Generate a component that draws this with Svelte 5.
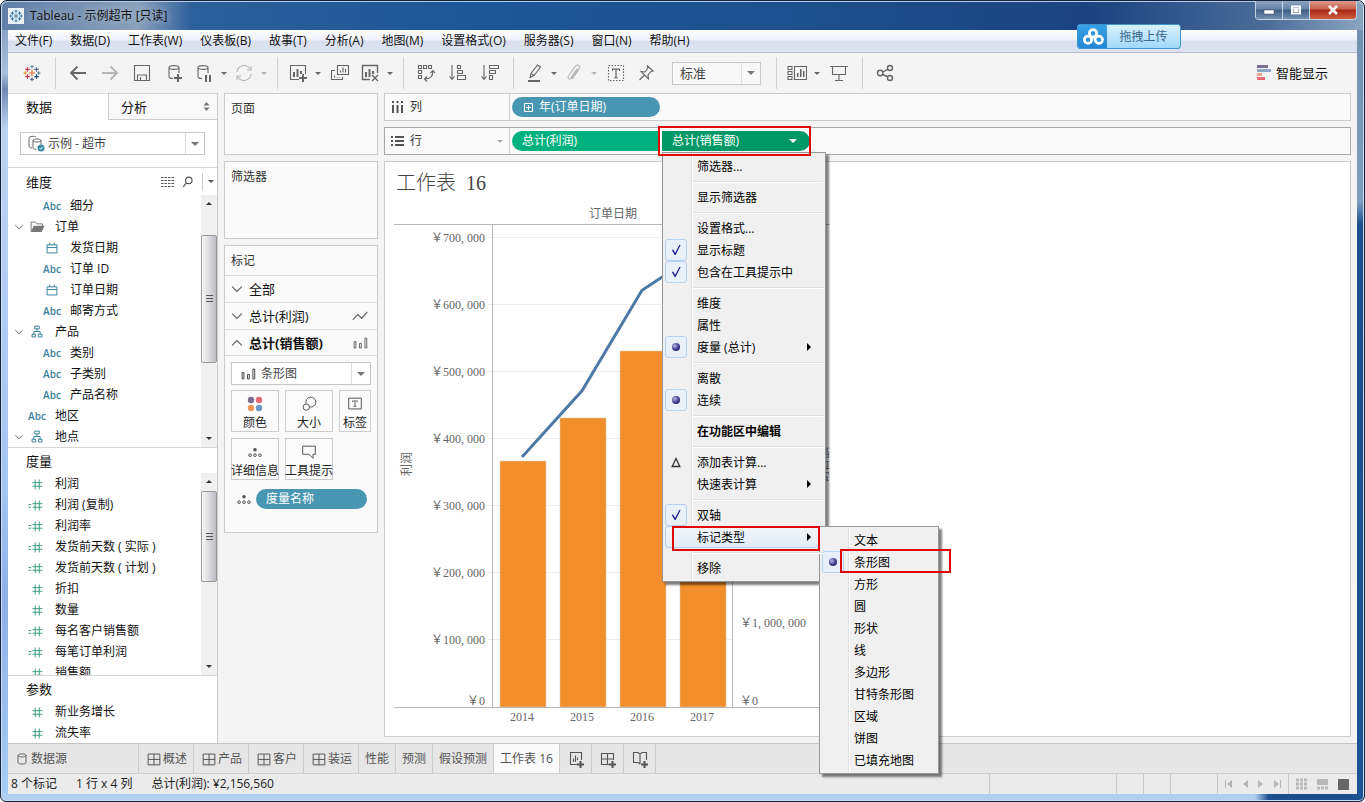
<script>
	const menus = ['文件(F)', '数据(D)', '工作表(W)', '仪表板(B)', '故事(T)', '分析(A)', '地图(M)', '设置格式(O)', '服务器(S)', '窗口(N)', '帮助(H)'];

	// d: stroked outline, f: solid parts, on a 20x20 grid
	const icons = {
		back: { d: 'M18 10H3M9.5 3.5L3 10l6.500 6.500', w: 1.8 },
		forward: { d: 'M2 10h15M10.500 3.500L17 10l-6.500 6.500', w: 1.8 },
		save: { d: 'M2.500 2.500h15v15h-15zM5.500 17v-5h9v5M8.500 17v-3' },
		addData: { d: 'M5 4.500c0-2.500 10-2.500 10 0s-10 2.500-10 0v9c0 1.500 2 2 4 2M15 4.500V10', f: 'M13 11h2v3h3v2h-3v3h-2v-3h-3v-2h3z' },
		pauseData: { d: 'M4 4.500c0-2.500 10-2.500 10 0s-10 2.500-10 0v9c0 1.500 2 2 4 2M14 4.500V10', f: 'M11 12h2v7h-2zM15 12h2v7h-2z' },
		refresh: { d: 'M3 9a7 7 0 0 1 13-3M17 11a7 7 0 0 1-13 3M17 3v4h-4M3 17v-4h4' },
		newSheet: { d: 'M11 16.500H2.500v-14h15V11', f: 'M5 9h2v5H5zM8.500 6h2v8h-2zM12 8h2v3h-2zM14 11h2v3h3v2h-3v3h-2v-3h-3v-2h3z' },
		duplicate: { d: 'M7.500 2.500h11v9h-11zM5 7.500H1.500v9h11V14M10.500 9.500v-2M13 9.500v-5M15.500 9.500V6M4.500 14.500v-2M7 14.500V14M9.500 14.500V14' },
		clear: { d: 'M10 16.500H2.500v-14h15V10M12 12l6 6M18 12l-6 6', f: 'M5 9h2v5H5zM8.500 6h2v8h-2zM12 8h2v3h-2z', w: 1.4 },
		swap: { d: 'M2.500 2.500h3v3h-3zM7.500 2.500h3v3h-3zM12.500 2.500h3v3h-3zM2.500 7.500h3v3h-3zM2.500 12.500h3v3h-3zM17 8c0 5-3 8-8 8M14.500 10L17 7.500l2 2.500M11 13.500L8.500 16l2.500 2.500' },
		sortAsc: { d: 'M4 2v14M1.500 13.500L4 16.500l2.500-3M9.500 2.500h3v3h-3zM9.500 7.500h5v3h-5zM9.500 12.500h8v4h-8z' },
		sortDesc: { d: 'M4 2v14M1.500 13.500L4 16.500l2.500-3M9.500 2.500h9v3h-9zM9.500 7.500h6v3h-6zM9.500 12.500h3v4h-3z' },
		highlight: { d: 'M6 14.500l1-4 6.500-8.500 3 2-6.500 8.500zM7 10.500l3 2', f: 'M4 17h12v2H4z' },
		clip: { d: 'M14 6l-6 9c-2 2.500-5 .5-3.500-2L11 3.500c2-3 6-.5 4.500 2L9 15c-1 1-2.500 0-1.500-1.500L13 6' },
		text: { d: 'M2.500 2.500h15v15h-15z', f: 'M6 5.500h8V8h-1V6.700h-2.400v7.600h1.200v.9H8.200v-.9h1.200V6.700H7V8H6z', dash: '1.500 1.500' },
		pin: { d: 'M11 2.500l6 5.500-2 .5-3 3.500.5 4-7.500-7.500 4 .5 3-4zM8.500 12l-5 5' },
		cards: { d: 'M7.500 3.500h12v13h-12zM1 3.500h4v3H1zM1 8.500h4v3H1zM1 13.500h4v3H1z', f: 'M10 10h1.500v4H10zM13 6h1.500v8H13zM16 8h1.500v6H16z' },
		present: { d: 'M1 3.500h18M3.500 3.500v8h13v-8M10 11.500v6M6 17.500h8' },
		share: { d: 'M2.500 10a2.700 2.700 0 1 0 5.400 0a2.700 2.700 0 1 0-5.400 0M12.500 5a2.500 2.500 0 1 0 5 0a2.500 2.500 0 1 0-5 0M12.500 15a2.500 2.500 0 1 0 5 0a2.500 2.500 0 1 0-5 0M8 9l5-2.800M8 11.500l5 2.500', w: 1.4 },
		folder: { d: 'M3.500 15V4.500h5l1.500 2h6V9', f: 'M3 15.500L6.500 8.500h12L15 15.500z' },
		date: { d: 'M4.500 6.500h11v9h-11zM4.500 9.500h11M7.500 4v2.500M12.500 4v2.500' },
		tree: { d: 'M7.500 3.500h5v3h-5zM4.500 12.500h4v3h-4zM11.500 12.500h4v3h-4zM10 6.500v3M6.500 12.500v-3h7v3' },
		number: { d: 'M8 5v11M12.500 5v11M5 8.500h11M5 12.500h11' },
		calc: { d: 'M8 5v11M12.500 5v11M5 8.500h11M5 12.500h11M.5 9.500h3M.5 12.500h3' },
		line: { d: 'M2 14l5.500-5.500 4.500 4 6-7', w: 1.4 },
		bars: { d: 'M3.500 8.500h2v7h-2zM9.500 10.500h2v5h-2zM15.500 4.500h2v11h-2z' },
		size: { d: 'M6.800 9.500A5.500 5.500 0 1 1 10.800 13.200M3.500 13.500a3.500 3.500 0 1 0 7 0a3.500 3.500 0 1 0-7 0' },
		label: { d: 'M3 3.500h14v12H3z', f: 'M7 6h6v2h-1V7h-1.500v5h1v1h-3v-1h1V7H8v1H7z' },
		detail: { d: 'M3 13.500a1.500 1.500 0 1 0 3 0a1.500 1.500 0 1 0-3 0M8.500 13.500a1.500 1.500 0 1 0 3 0a1.500 1.500 0 1 0-3 0M14 13.500a1.500 1.500 0 1 0 3 0a1.500 1.500 0 1 0-3 0', f: 'M8 7.500a2 2 0 1 0 4 0a2 2 0 1 0-4 0' },
		tooltip: { d: 'M3 3.500h14v9h-2.500v4.500l-4.500-4.500H3z' },
		source: { d: 'M5 5.500c0-2.500 10-2.500 10 0v9c0 2.500-10 2.500-10 0zc0 2.500 10 2.500 10 0' },
		grid: { d: 'M3.500 4.500h13v12h-13zM10 4.500v12M3.500 10.500h13' },
		newTab: { d: 'M12 15.500H4.500v-12h11V11M7.500 13V9.500M9.500 13V6.500M11.500 11V8.500', f: 'M13.500 12h2v2.500H18v2h-2.500V19h-2v-2.500H11v-2h2.500z' },
		newDash: { d: 'M12 15.500H3.500v-11h12V11M9.500 4.500v11M3.500 10h12', f: 'M13.500 12h2v2.500H18v2h-2.500V19h-2v-2.500H11v-2h2.500z' },
		newStory: { d: 'M10 15l-2-1.500H3.500v-10H8l2 1.500 2-1.500h4.500V11M10 5v10', f: 'M13.500 12h2v2.500H18v2h-2.500V19h-2v-2.500H11v-2h2.500z' },
		search: { d: 'M7 8a4 4 0 1 0 8 0a4 4 0 1 0-8 0M8 11l-4 5', w: 1.5 },
		down: { d: 'M4 7l6 6 6-6', w: 1.6 },
		up: { d: 'M4 13l6-6 6 6', w: 1.6 }
	};

	const toolbar = [
		[['back', 32], ['forward', 32, 'off'], ['save', 32], ['addData', 32], ['pauseData', 28], ['caret', 12], ['refresh', 28, 'off'], ['caret', 12, 'off']],
		[['newSheet', 28], ['caret', 12], ['duplicate', 32], ['clear', 28], ['caret', 12]],
		[['swap', 32], ['sortAsc', 32], ['sortDesc', 32]],
		[['highlight', 28], ['caret', 12], ['clip', 28, 'off'], ['caret', 12, 'off'], ['text', 32], ['pin', 28], ['fit']],
		[['cards', 28], ['caret', 12], ['present', 32]],
		[['share', 32]]
	];

	const dimensions = [
		{ name: '细分', icon: 'abc', level: 1 },
		{ name: '订单', icon: 'folder', open: true },
		{ name: '发货日期', icon: 'date', level: 1 },
		{ name: '订单 ID', icon: 'abc', level: 1 },
		{ name: '订单日期', icon: 'date', level: 1 },
		{ name: '邮寄方式', icon: 'abc', level: 1 },
		{ name: '产品', icon: 'tree', open: true },
		{ name: '类别', icon: 'abc', level: 1 },
		{ name: '子类别', icon: 'abc', level: 1 },
		{ name: '产品名称', icon: 'abc', level: 1 },
		{ name: '地区', icon: 'abc' },
		{ name: '地点', icon: 'tree', open: true }
	];
	const measures = [
		{ name: '利润', icon: 'number' },
		{ name: '利润 (复制)', icon: 'calc' },
		{ name: '利润率', icon: 'calc' },
		{ name: '发货前天数 ( 实际 )', icon: 'calc' },
		{ name: '发货前天数 ( 计划 )', icon: 'calc' },
		{ name: '折扣', icon: 'number' },
		{ name: '数量', icon: 'number' },
		{ name: '每名客户销售额', icon: 'calc' },
		{ name: '每笔订单利润', icon: 'calc' },
		{ name: '销售额', icon: 'number' }
	];
	const parameters = [
		{ name: '新业务增长', icon: 'number' },
		{ name: '流失率', icon: 'number' }
	];

	const pillMenu = [
		{ text: '筛选器...' },
		null,
		{ text: '显示筛选器' },
		null,
		{ text: '设置格式...' },
		{ text: '显示标题', mark: 'check' },
		{ text: '包含在工具提示中', mark: 'check' },
		null,
		{ text: '维度' },
		{ text: '属性' },
		{ text: '度量 (总计)', mark: 'radio', arrow: true },
		null,
		{ text: '离散' },
		{ text: '连续', mark: 'radio' },
		null,
		{ text: '在功能区中编辑', bold: true },
		null,
		{ text: '添加表计算...', mark: 'delta' },
		{ text: '快速表计算', arrow: true },
		null,
		{ text: '双轴', mark: 'check' },
		{ text: '标记类型', arrow: true, active: true },
		null,
		{ text: '移除' }
	];
	const markTypes = ['文本', '条形图', '方形', '圆', '形状', '线', '多边形', '甘特条形图', '区域', '饼图', '已填充地图'];

	let sheets = ['概述', '产品', '客户', '装运'];
	let plainSheets = ['性能', '预测', '假设预测'];

	// chart
	const baseline = 507;
	const years = [
		{ year: 2014, profit: 373000, sales: 2930000 },
		{ year: 2015, profit: 472000, sales: 3440000 },
		{ year: 2016, profit: 622000, sales: 4240000 },
		{ year: 2017, profit: 681000, sales: 5100000 }
	];
	const ticks = [1, 2, 3, 4, 5, 6, 7];
	const profitY = (v) => baseline - (v / 100000) * 67;
	const salesY = (v) => Math.round(baseline - (v / 1000000) * 84);
	const yearX = (i) => 128 + i * 60;
	const linePoints = years.map((d, i) => `${yearX(i)},${profitY(d.profit)}`).join(' ');

	const logo = [
		[10, 10, 3.5, '#e8762d'],
		[5, 6, 2.5, '#c0394d'],
		[15, 6, 2.5, '#5b6591'],
		[5, 14, 2.5, '#c0394d'],
		[15, 14, 2.5, '#1f457e'],
		[10, 3, 2, '#7099a5'],
		[10, 17, 2, '#5b6591'],
		[2.5, 10, 2, '#eb912c'],
		[17.5, 10, 2, '#59879b']
	];
</script>

{#snippet icon(name, size = 20)}
	<svg class="icon" width={size} height={size} viewBox="0 0 20 20" aria-hidden="true">
		<path d={icons[name].d} fill="none" stroke="currentColor" stroke-width={icons[name].w || 1.1} stroke-dasharray={icons[name].dash} />
		{#if icons[name].f}
			<path d={icons[name].f} fill="currentColor" />
		{/if}
	</svg>
{/snippet}

{#snippet tableau(size, color)}
	<svg width={size} height={size} viewBox="0 0 20 20" aria-hidden="true">
		{#each logo as [x, y, r, c]}
			<path d="M{x - r} {y}h{r * 2}M{x} {y - r}v{r * 2}" stroke={color || c} stroke-width="1.3" />
		{/each}
	</svg>
{/snippet}

{#snippet field(item)}
	<li class="field" class:nested={item.level}>
		<span class="twisty">{#if item.open}{@render icon('down', 12)}{/if}</span>
		<span class="field-icon {item.icon}">
			{#if item.icon === 'abc'}Abc{:else}{@render icon(item.icon, 18)}{/if}
		</span>
		<span>{item.name}</span>
	</li>
{/snippet}

{#snippet scrollbar(top, height)}
	<div class="scrollbar">
		<span class="arrow up"></span>
		<div class="track">
			<div class="thumb" style="margin-top: {top}px; height: {height}px"><i></i></div>
		</div>
		<span class="arrow down"></span>
	</div>
{/snippet}

{#snippet mark(kind)}
	<span class="mark {kind}">
		{#if kind === 'check'}
			<svg width="10" height="12" viewBox="0 0 12 14"><path d="M1 7l1.500-.5L5 10.500 10 1h1.500L5.500 13H4.500z" fill="#14148c" /></svg>
		{:else if kind === 'radio'}
			<i></i>
		{:else if kind === 'delta'}
			<svg width="10" height="11" viewBox="0 0 10 11"><path d="M5 1.500L1.200 9.500h7.600z" fill="none" stroke="#333" stroke-width="1.300" /></svg>
		{/if}
	</span>
{/snippet}

<div class="window">
	<header class="titlebar">
		<span class="app-icon">{@render tableau(14, '#2f6c9c')}</span>
		<span class="title">Tableau - 示例超市 [只读]</span>
		<div class="window-buttons">
			<button aria-label="最小化"><svg width="12" height="10"><path d="M1 5h10v4H1z" fill="#fff" stroke="#445" stroke-width=".5" /></svg></button>
			<button aria-label="最大化"><svg width="12" height="10"><path d="M2 1.500h8v7H2zM4.500 4h3v2h-3z" fill="none" stroke="#fff" stroke-width="2" /></svg></button>
			<button class="close" aria-label="关闭"><svg width="12" height="10"><path d="M2 1l8 8M10 1L2 9" stroke="#fff" stroke-width="2.500" /></svg></button>
		</div>
		<button class="upload">
			<span class="cloud">
				<svg width="22" height="20" viewBox="0 0 24 22" fill="none" stroke="#fff" stroke-width="3">
					<circle cx="12" cy="7" r="4" />
					<circle cx="6.500" cy="14" r="4" />
					<path d="M13 10l2 6a4 4 0 1 0 0-4" />
				</svg>
			</span>
			<span class="upload-text">拖拽上传</span>
		</button>
	</header>

	<div class="client">
		<nav class="menubar">
			{#each menus as item}
				<button>{item}</button>
			{/each}
		</nav>

		<div class="toolbar">
			<div class="brand">{@render tableau(18)}</div>
			{#each toolbar as group}
				<div class="tools">
					{#each group as [name, width, state]}
						{#if name === 'fit'}
							<label class="dropdown fit">
								<select aria-label="适合"><option>标准</option></select>
							</label>
						{:else if name === 'caret'}
							<button class="caret" class:off={state} aria-label="更多"></button>
						{:else}
							<button class="tool" class:wide={width === 32} class:off={state} aria-label={name}>{@render icon(name)}</button>
						{/if}
					{/each}
				</div>
			{/each}
			<button class="show-me">
				<svg width="15" height="16"><path d="M0 0h11v3H0z" fill="#7b6d93" /><path d="M0 4h14v3H0z" fill="#8aa9c9" /><path d="M0 8h5v3H0z" fill="#eba58c" /><path d="M0 12h8v3H0z" fill="#e56a75" /></svg>
				智能显示
			</button>
		</div>

		<main>
			<aside class="sidebar">
				<div class="pane-tabs">
					<button class="current">数据</button>
					<button>分析<svg width="7" height="9"><path d="M3.500 0L6.500 3.500h-6zM3.500 9L.5 5.500h6z" fill="#777" /></svg></button>
				</div>
				<div class="source">
					<label class="dropdown">
						<svg class="source-icon" width="17" height="17" viewBox="0 0 17 17" fill="none" stroke="#666">
							<path d="M1 3c0-2 6-2 7-1M1 3v8c0 1 1 2 3 2M5 5.500c0-2 8-2 8 0s-8 2-8 0v7c0 1 1 2 3 2M13 5.500v4" />
							<circle cx="13" cy="13" r="3.500" fill="#3a87a8" stroke="none" />
							<path d="M11.500 13l1.200 1.200 2-2.400" stroke="#fff" />
						</svg>
						<select aria-label="数据源"><option>示例 - 超市</option></select>
					</label>
				</div>
				<div class="pane-head ruled">
					<h2>维度</h2>
					<svg width="13" height="10"><path d="M0 .5h13M0 3.500h13M0 6.500h13M0 9.500h13" stroke="#555" stroke-dasharray="2.500 1" /></svg>
					{@render icon('search', 16)}
					<button class="caret" aria-label="维度菜单"></button>
				</div>
				<div class="list">
					<ul>{#each dimensions as item}{@render field(item)}{/each}</ul>
					{@render scrollbar(23, 128)}
				</div>
				<div class="pane-head ruled short"><h2>度量</h2></div>
				<div class="list grow">
					<ul>{#each measures as item}{@render field(item)}{/each}</ul>
					{@render scrollbar(1, 91)}
				</div>
				<div class="pane-head ruled short"><h2>参数</h2></div>
				<div class="list">
					<ul>{#each parameters as item}{@render field(item)}{/each}</ul>
				</div>
			</aside>

			<section class="cards">
				<div class="card pages"><h3>页面</h3></div>
				<div class="card filters"><h3>筛选器</h3></div>
				<div class="card marks">
					<h3>标记</h3>
					<button class="mark-row">{@render icon('down', 16)}<span>全部</span></button>
					<button class="mark-row">{@render icon('down', 16)}<span>总计(利润)</span>{@render icon('line', 18)}</button>
					<button class="mark-row open">{@render icon('up', 16)}<span>总计(销售额)</span>{@render icon('bars', 18)}</button>
					<div class="mark-body">
						<label class="dropdown">
							{@render icon('bars', 18)}
							<select aria-label="标记类型"><option>条形图</option></select>
						</label>
						<div class="mark-buttons">
							<button>
								<svg width="20" height="18"><circle cx="6" cy="5" r="3.200" fill="#7b6d93" /><circle cx="14" cy="5" r="3.200" fill="#e56a75" /><circle cx="6" cy="13" r="3.200" fill="#f0975a" /><circle cx="14" cy="13" r="3.200" fill="#6b9bc3" /></svg>
								颜色
							</button>
							<button>{@render icon('size', 18)}大小</button>
							<button>{@render icon('label', 18)}标签</button>
							<button>{@render icon('detail', 18)}详细信息</button>
							<button>{@render icon('tooltip', 18)}工具提示</button>
						</div>
						<div class="detail-pill">
							{@render icon('detail', 18)}
							<button class="pill blue">度量名称</button>
						</div>
					</div>
				</div>
			</section>

			<section class="work">
				<div class="shelf">
					<div class="shelf-name">
						<svg width="13" height="12"><path d="M2 0v2M6.500 0v2M11 0v2M2 4v8M6.500 4v8M11 4v8" stroke="#555" stroke-width="2" /></svg>
						列
					</div>
					<button class="pill blue">
						<svg width="9" height="9"><path d="M.5.5h8v8h-8zM2 4.500h5M4.500 2v5" fill="none" stroke="#fff" /></svg>
						年(订单日期)
					</button>
				</div>
				<div class="shelf rows">
					<div class="shelf-name">
						<svg width="13" height="10"><path d="M0 1h2M4 1h9M0 5h2M4 5h9M0 9h2M4 9h9" stroke="#555" stroke-width="2" /></svg>
						行
						<span class="caret pale"></span>
					</div>
					<button class="pill green first">总计(利润)</button>
					<div class="pill-wrap">
						<button class="pill green second">总计(销售额)<i></i></button>
						<ul class="menu" role="menu">
							{#each pillMenu as item}
								{#if item}
									<li class:active={item.active} class:bold={item.bold} role="none">
										{@render mark(item.mark)}
										<button role="menuitem">{item.text}</button>
										{#if item.arrow}<span class="more"></span>{/if}
										{#if item.active}
											<ul class="menu submenu" role="menu">
												{#each markTypes as type}
													<li role="none">
														{@render mark(type === '条形图' ? 'radio' : '')}
														<button role="menuitem">{type}</button>
														{#if type === '条形图'}<span class="frame"></span>{/if}
													</li>
												{/each}
											</ul>
											<span class="frame"></span>
										{/if}
									</li>
								{:else}
									<li class="divider" role="separator"></li>
								{/if}
							{/each}
						</ul>
						<span class="frame"></span>
					</div>
				</div>

				<div class="view">
					<h1>工作表&nbsp; 16</h1>
					<svg class="chart" width="440" height="530" viewBox="0 0 440 530">
						<text x="219" y="18" class="mid">订单日期</text>
						{#each ticks as t}
							<path d="M94 {baseline - t * 67 - 0.5}H338" stroke="#ededed" />
							<text x="91" y={baseline - t * 67 + 4} class="end">￥{t}00, 000</text>
						{/each}
						<text x="91" y="505" class="end">￥0</text>
						{#each years as d, i}
							<rect x={106 + i * 60} y={salesY(d.sales)} width="46" height={baseline - salesY(d.sales)} fill="#f28e2b" stroke="#d9c8b4" stroke-width=".5" />
							<text x={128 + i * 60} y="521" class="mid">{d.year}</text>
						{/each}
						<polyline points={linePoints} fill="none" stroke="#4e79a7" stroke-width="3" />
						<path d="M0 24.500H436M0 507.500H436M98.500 24V507M338.500 24V507" stroke="#b8b8b8" />
						<text x="346" y="427">￥1, 000, 000</text>
						<text x="346" y="505">￥0</text>
						<text class="mid" transform="translate(17 264) rotate(-90)">利润</text>
						<text class="mid" transform="translate(434 265) rotate(-90)">销售额</text>
					</svg>
				</div>
			</section>
		</main>

		<nav class="sheets">
			<button class="data-source">{@render icon('source', 16)}数据源</button>
			{#each sheets as sheet}
				<button>{@render icon('grid', 18)}{sheet}</button>
			{/each}
			{#each plainSheets as sheet}
				<button>{sheet}</button>
			{/each}
			<button class="current">工作表 16</button>
			<button class="new" aria-label="新建工作表">{@render icon('newTab')}</button>
			<button class="new" aria-label="新建仪表板">{@render icon('newDash')}</button>
			<button class="new" aria-label="新建故事">{@render icon('newStory')}</button>
		</nav>

		<footer class="status">
			<span>8 个标记</span>
			<span>1 行 x 4 列</span>
			<span class="sum">总计(利润): ¥2,156,560</span>
			<i class="cell large"></i>
			<i class="cell"></i>
			<i class="cell"></i>
			<i class="cell medium"></i>
			<div class="pager">
				<svg width="56" height="8" fill="#b4b4b4"><path d="M0 0h1v8H0zM7 0v8L2 4zM23 0v8l-5-4zM33 0v8l5-4zM49 0v8l5-4zM55 0h1v8h-1z" /></svg>
			</div>
			<div class="modes">
				<svg width="54" height="12"><path d="M0 2h12M0 6h12M0 10h12" stroke="#b9b9b9" stroke-width="3" stroke-dasharray="3 1" /><path d="M21 1h11v6H21z" fill="#b9b9b9" /><path d="M21 10h12" stroke="#b9b9b9" stroke-width="3" stroke-dasharray="3 1" /><path d="M42 1h11v11H42z" fill="#666" /></svg>
			</div>
		</footer>
	</div>
</div>

<style>
	:global(body) {
		margin: 0;
	}

	.window {
		box-sizing: border-box;
		display: flex;
		flex-direction: column;
		height: 100vh;
		padding: 0 7px 7px;
		border: 1px solid #14253f;
		border-radius: 7px 7px 6px 6px;
		background:
			linear-gradient(#6f8fb2, #7f9fbe 25%, #1c4f8e 28%, #1d5394) right / 8px 100% no-repeat,
			linear-gradient(90deg, #b0d0f2 92%, #1c4f8e 93%) bottom / 100% 8px no-repeat,
			linear-gradient(#7391b5, #a9c0dc 9%, #6f89b0 11%, #bcd3f0 16%, #a6c6f3 60%, #8fb0e6 75%, #a8cdf5);
		box-shadow: inset 0 0 0 1px #c9dcf0;
		font: 12px/16px 'Open Sans', 'Noto Sans CJK SC', sans-serif;
		color: #222;
	}

	button,
	select {
		font: inherit;
		color: inherit;
		background: none;
		border: 0;
		padding: 0;
		margin: 0;
	}

	ul {
		list-style: none;
		margin: 0;
		padding: 0;
	}

	h1,
	h2,
	h3 {
		margin: 0;
		font-weight: 400;
	}

	svg {
		flex: none;
	}

	/* title bar */
	.titlebar {
		position: relative;
		display: flex;
		align-items: center;
		height: 29px;
		flex: none;
		margin: 0 -6px;
		padding: 0 6px;
		border-radius: 6px 6px 0 0;
		box-shadow: inset 0 1px #b7cce2;
		background: linear-gradient(90deg, #5f7fa6, #8aa0bb 10%, #2c5f9b 14%, #1c5797 35%, #1d4f8d 60%, #1c4381 80%, #4c6d99 93%, #8ba5c0);
	}

	.app-icon {
		display: flex;
		padding: 1px;
		background: #e9f1f7;
	}

	.title {
		margin-left: 6px;
		color: #111;
		text-shadow: 0 0 6px #c5d2e2;
	}

	.window-buttons {
		display: flex;
		align-self: flex-start;
		margin-left: auto;
		border: 1px solid #c4d3e3;
		border-top: 0;
		border-radius: 0 0 4px 4px;
		overflow: hidden;
	}

	.window-buttons button {
		display: flex;
		align-items: center;
		justify-content: center;
		width: 27px;
		height: 18px;
		border-right: 1px solid #c4d3e3;
		background: linear-gradient(#8fa5c0, #6582a6 45%, #3f608a 50%, #7390b0);
	}

	.window-buttons .close {
		width: 46px;
		border: 0;
		background: linear-gradient(#dc9b8c, #c9604c 45%, #a92815 50%, #ce5f43);
	}

	.upload {
		position: absolute;
		z-index: 2;
		top: 23px;
		right: 182px;
		display: flex;
		width: 104px;
		height: 25px;
		border: 1px solid #4094cc;
		border-radius: 3px;
		background: linear-gradient(#d8f1fd, #a2d8fa);
		box-sizing: border-box;
		color: #36678c;
		overflow: hidden;
	}

	.cloud {
		display: flex;
		align-items: center;
		justify-content: center;
		width: 29px;
		height: 100%;
		background: linear-gradient(#38a1e6, #2388d4);
	}

	.upload-text {
		flex: 1;
		line-height: 24px;
	}

	.client {
		display: flex;
		flex-direction: column;
		flex: 1;
		min-height: 0;
		background: #f4f4f4;
	}

	.menubar {
		display: flex;
		gap: 18px;
		flex: none;
		height: 22px;
		padding-left: 7px;
		border-bottom: 1px solid #b6bccc;
		background: linear-gradient(#fff, #f0f2fa 45%, #d9dfef 50%, #dde3f3);
		color: #111;
	}

	/* toolbar */
	.toolbar {
		display: flex;
		flex: none;
		height: 40px;
		color: #666;
	}

	.brand {
		display: flex;
		align-items: center;
		justify-content: center;
		width: 47px;
		border-right: 1px solid #d0d0d0;
		margin: 4px 0;
	}

	.tools {
		display: flex;
		align-items: center;
		padding: 0 7px 0 6px;
		margin: 4px 0;
		border-right: 1px solid #d0d0d0;
	}

	.tools:nth-last-child(2) {
		border: 0;
	}

	.tool {
		display: flex;
		justify-content: center;
		width: 28px;
	}

	.tool.wide {
		width: 32px;
	}

	.off {
		color: #b5b5b5;
	}

	.caret {
		display: flex;
		justify-content: center;
		width: 12px;
	}

	.caret::after,
	.dropdown::after {
		content: '';
		border: 3px solid transparent;
		border-top-color: currentColor;
		border-bottom: 0;
	}

	.dropdown {
		display: flex;
		align-items: center;
		box-sizing: border-box;
		height: 23px;
		border: 1px solid #c8c8c8;
		background: #fff;
		color: #444;
	}

	.dropdown select {
		flex: 1;
		min-width: 0;
		align-self: stretch;
		appearance: none;
		border-right: 1px solid #ddd;
		outline: 0;
	}

	.dropdown::after {
		border-width: 4px 4px 0;
		margin: 0 5px;
		color: #777;
	}

	.fit {
		width: 89px;
		margin: 0 8px 0 12px;
		background: #f8f8f8;
		font-size: 13px;
	}

	.fit select {
		padding-left: 7px;
	}

	.show-me {
		display: flex;
		align-items: center;
		gap: 4px;
		margin-left: auto;
		padding-right: 29px;
		font-size: 13px;
		color: #111;
	}

	main {
		display: flex;
		flex: 1;
		min-height: 0;
		gap: 6px;
		padding-right: 6px;
	}

	/* data pane */
	.sidebar {
		display: flex;
		flex-direction: column;
		width: 209px;
		border-right: 1px solid #ccc;
		background: #fff;
		color: #111;
	}

	.pane-tabs {
		display: flex;
		flex: none;
		height: 27px;
		font-size: 13px;
	}

	.pane-tabs button {
		display: flex;
		align-items: center;
		justify-content: space-between;
		flex: 1;
		padding: 0 7px 0 12px;
		border: solid #ccc;
		border-width: 1px 0 1px 1px;
		background: #f9f9f9;
	}

	.pane-tabs .current {
		border-width: 1px 0 0;
		border-color: #ddd;
		padding-left: 18px;
		background: #fff;
		flex: 0 0 100px;
	}

	.source {
		padding: 12px 12px;
		flex: none;
	}

	.source-icon {
		margin: 0 3px 0 7px;
	}

	.pane-head {
		display: flex;
		align-items: center;
		flex: none;
		height: 27px;
		padding: 0 3px 0 18px;
		gap: 6px;
		color: #555;
	}

	.pane-head.short {
		height: 25px;
	}

	.pane-head h2 {
		flex: 1;
		font-size: 13px;
		color: #111;
	}

	.pane-head .caret {
		padding-left: 5px;
		border-left: 1px solid #ccc;
		height: 18px;
		align-items: center;
	}

	.ruled {
		border-top: 1px solid #d6d6d6;
	}

	.list {
		display: flex;
		overflow: hidden;
		flex: none;
	}

	.list.grow {
		flex: 1;
		min-height: 0;
	}

	.list ul {
		flex: 1;
	}

	.field {
		display: flex;
		align-items: center;
		height: 21px;
		padding-left: 3px;
		white-space: nowrap;
	}

	.field.nested {
		padding-left: 18px;
	}

	.twisty {
		display: flex;
		justify-content: center;
		width: 16px;
		color: #666;
	}

	.field-icon {
		display: flex;
		justify-content: center;
		width: 20px;
		margin-right: 8px;
		color: #3a829f;
	}

	.abc {
		font-size: 10px;
		font-weight: 600;
	}

	.folder {
		color: #777;
	}

	.number,
	.calc {
		color: #3c9c81;
	}

	.scrollbar {
		display: flex;
		flex-direction: column;
		width: 16px;
		background: #f0f0f0;
	}

	.arrow {
		display: flex;
		align-items: center;
		justify-content: center;
		height: 17px;
	}

	.arrow::after {
		content: '';
		border: 3px solid transparent;
		border-bottom-color: #333;
		border-top: 0;
	}

	.arrow.down::after {
		border-top: 3px solid #333;
		border-bottom: 0;
	}

	.track {
		flex: 1;
	}

	.thumb {
		display: flex;
		align-items: center;
		justify-content: center;
		box-sizing: border-box;
		border: 1px solid #979797;
		border-radius: 2px;
		background: linear-gradient(90deg, #f6f6f6, #dcdce0 50%, #bcbcc2);
	}

	.thumb i {
		width: 7px;
		height: 8px;
		background: repeating-linear-gradient(#555 0 1px, transparent 1px 3px);
	}

	/* cards */
	.cards {
		display: flex;
		flex-direction: column;
		gap: 6px;
		width: 154px;
	}

	.card {
		box-sizing: border-box;
		border: 1px solid #ccc;
		background: #fafafa;
	}

	.card h3 {
		padding: 7px 6px 6px;
		font-size: 12px;
		color: #333;
	}

	.pages {
		height: 62px;
	}

	.filters {
		height: 78px;
	}

	.marks {
		height: 288px;
	}

	.mark-row {
		display: flex;
		align-items: center;
		box-sizing: border-box;
		width: 100%;
		height: 27px;
		padding: 0 8px 0 4px;
		border-top: 1px solid #ddd;
		font-size: 13px;
		text-align: left;
		color: #666;
	}

	.mark-row span {
		flex: 1;
		margin-left: 4px;
		color: #111;
	}

	.mark-row.open {
		border-bottom: 1px solid #ddd;
		font-weight: 700;
	}

	.mark-body {
		padding: 6px;
		color: #555;
	}

	.mark-body .dropdown {
		padding-left: 7px;
	}

	.mark-body select {
		padding-left: 4px;
	}

	.mark-buttons {
		display: grid;
		grid-template-columns: 48px 48px 32px;
		gap: 6px;
		margin-top: 5px;
	}

	.mark-buttons button {
		display: flex;
		flex-direction: column;
		align-items: center;
		justify-content: space-between;
		box-sizing: border-box;
		height: 42px;
		padding-top: 4px;
		border: 1px solid #ccc;
		background: #fbfbfb;
		white-space: nowrap;
		color: #222;
	}

	.mark-buttons :global(svg) {
		color: #555;
	}

	.detail-pill {
		display: flex;
		align-items: center;
		gap: 3px;
		margin: 9px 4px 0;
	}

	.pill {
		display: flex;
		align-items: center;
		gap: 6px;
		flex: 1;
		height: 20px;
		padding: 0 10px;
		border-radius: 10px;
		color: #fff;
		white-space: nowrap;
	}

	.blue {
		background: #4996b2;
	}

	.green {
		background: #00b180;
	}

	/* shelves */
	.work {
		display: flex;
		flex-direction: column;
		flex: 1;
		min-width: 0;
		gap: 6px;
		padding-bottom: 6px;
	}

	.shelf {
		display: flex;
		align-items: center;
		box-sizing: border-box;
		height: 28px;
		border: 1px solid #ccc;
		background: #fafafa;
	}

	.shelf.rows {
		border-color: #aaa;
	}

	.shelf-name {
		display: flex;
		align-items: center;
		gap: 6px;
		box-sizing: border-box;
		width: 125px;
		height: 100%;
		padding: 0 3px 0 6px;
		margin-right: 2px;
		border-right: 1px solid #ccc;
		color: #333;
	}

	.pale {
		margin-left: auto;
		color: #aaa;
	}

	.shelf .pill {
		flex: none;
		box-sizing: border-box;
		width: 148px;
	}

	.shelf .blue {
		padding-left: 12px;
	}

	.shelf .first {
		border-radius: 10px 0 0 10px;
	}

	.shelf .second {
		justify-content: space-between;
		padding-right: 13px;
		border-radius: 0 10px 10px 0;
		background: #009966;
	}

	.second i {
		border: 4px solid transparent;
		border-top-color: #fff;
		border-bottom: 0;
	}

	.pill-wrap {
		position: relative;
		margin-left: 2px;
		z-index: 3;
	}

	.frame {
		position: absolute;
		inset: -5px -1px -5px -4px;
		border: 2px solid #e00808;
		pointer-events: none;
	}

	/* popup menus */
	.menu {
		position: absolute;
		top: 21px;
		left: 0;
		box-sizing: border-box;
		width: 164px;
		padding: 2px;
		border: 1px solid #979797;
		background: linear-gradient(90deg, transparent 28px, #e0e0e0 28px 29px, #fff 29px 30px, transparent 30px) #f0f0f0;
		box-shadow: 3px 3px 2px rgba(0, 0, 0, 0.5);
		color: #000;
	}

	.menu li {
		position: relative;
		display: flex;
		align-items: center;
		height: 22px;
	}

	.menu .divider {
		height: 9px;
		background: linear-gradient(#e0e0e0 50%, #fff 50%) 28px 4px / 100% 2px no-repeat;
	}

	.menu button {
		flex: 1;
		margin-left: 10px;
		padding-top: 1px;
		text-align: left;
		white-space: nowrap;
	}

	.menu .bold {
		font-weight: 700;
	}

	.menu .active {
		box-shadow: inset 0 0 0 1px #b5d2f3;
		border-radius: 3px;
		background: linear-gradient(#f3f6fa, #e1ebf5);
	}

	.mark {
		display: flex;
		align-items: center;
		justify-content: center;
		box-sizing: border-box;
		width: 22px;
		height: 22px;
	}

	.mark.check,
	.mark.radio {
		border: 1px solid #b5d2f3;
		border-radius: 3px;
		background: #e8f0f9;
	}

	.mark i {
		width: 8px;
		height: 8px;
		border-radius: 50%;
		background: radial-gradient(circle at 35% 35%, #b8b8e8, #41418f 50%, #14144e);
	}

	.more {
		margin-right: 12px;
		border: 4px solid transparent;
		border-left: 4px solid #000;
		border-right: 0;
	}

	.menu .submenu {
		top: 0;
		left: 154px;
		width: 120px;
	}

	.active > .frame {
		inset: 0 3px -3px 7px;
	}

	.submenu .frame {
		inset: -2px -15px 0 18px;
	}

	/* worksheet */
	.view {
		flex: 1;
		min-height: 0;
		padding: 9px 9px 0;
		border: 1px solid #ccc;
		background: #fff;
	}

	.view h1 {
		font: 300 20px/24px 'Liberation Serif', 'Noto Sans CJK SC', serif;
		padding-left: 2px;
		color: #444;
	}

	.chart {
		display: block;
		margin-top: 5px;
		font: 12px 'Liberation Serif', 'Noto Sans CJK SC', serif;
		fill: #666;
	}

	.mid {
		text-anchor: middle;
	}

	.end {
		text-anchor: end;
	}

	/* sheet tabs */
	.sheets {
		display: flex;
		flex: none;
		height: 29px;
		border-top: 1px solid #c4c4c4;
		background: #e6e6e6;
		color: #555;
	}

	.sheets button {
		display: flex;
		align-items: center;
		padding: 0 6px;
		border-right: 1px solid #ccc;
		white-space: nowrap;
	}

	.sheets .data-source {
		gap: 1px;
		width: 131px;
		box-sizing: border-box;
	}

	.sheets .new {
		padding: 0 5px 0 6px;
	}

	.sheets .current {
		background: #fafafa;
	}

	.status {
		display: flex;
		align-items: center;
		flex: none;
		height: 20px;
		padding-left: 3px;
		border-top: 1px solid #d0d0d0;
		background: #ebebeb;
	}

	.status span {
		margin-right: 19px;
	}

	.status .sum {
		flex: 1;
		margin: 0;
	}

	.cell,
	.pager,
	.modes {
		display: flex;
		align-items: center;
		justify-content: center;
		box-sizing: border-box;
		width: 27px;
		height: 100%;
		border-left: 1px solid #c8c8c8;
	}

	.cell.large {
		width: 127px;
	}

	.cell.medium {
		width: 47px;
	}

	.pager {
		width: 71px;
	}

	.modes {
		width: 69px;
	}
</style>
